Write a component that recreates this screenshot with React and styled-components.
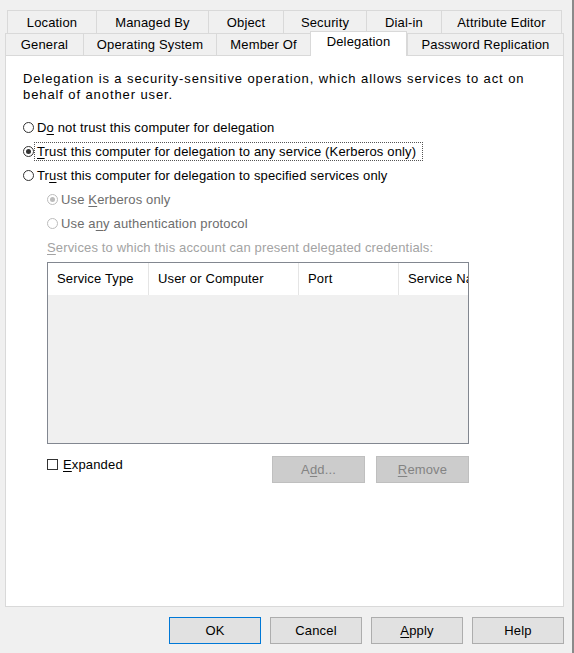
import React from "react";
import styled, { createGlobalStyle, css } from "styled-components";

const Global = createGlobalStyle`
  html, body { margin: 0; padding: 0; background: #f0f0f0; }
  body { font-family: "Liberation Sans", Arial, sans-serif; font-size: 13px; color: #000; letter-spacing: 0.15px; }
  * { box-sizing: border-box; }
`;

const Window = styled.div`
  width: 574px;
  height: 653px;
  background: #f0f0f0;
  border-right: 2px solid #8a8a8a;
  display: flex;
  flex-direction: column;
  overflow: hidden;
`;

const TabStrip = styled.div`
  padding: 10px 0 0 5px;
  display: flex;
  flex-direction: column;
`;

const TabRow = styled.div`
  display: flex;
  align-items: flex-start;
  padding-left: ${(p) => p.$indent || 0}px;
`;

const Tab = styled.div`
  flex: none;
  width: ${(p) => p.$w}px;
  height: ${(p) => p.$h}px;
  border-top: 1px solid #d9d9d9;
  border-left: 1px solid #d9d9d9;
  background: #f0f0f0;
  display: flex;
  align-items: center;
  justify-content: center;
  white-space: nowrap;
  line-height: 1;
  padding-top: ${(p) => p.$pt || 0}px;
  &:last-child { border-right: 1px solid #d9d9d9; }
  ${(p) =>
    p.$selected &&
    css`
      height: ${p.$h + 3}px;
      margin-top: -2px;
      margin-bottom: -1px;
      background: #fff;
      border-right: 1px solid #d9d9d9;
      position: relative;
      z-index: 1;
      padding-top: 0;
      padding-bottom: 5px;
    `}
`;

const Panel = styled.div`
  margin-left: 5px;
  width: 559px;
  height: 552px;
  background: #fff;
  border: 1px solid #d9d9d9;
  padding: 15px 17px 0 17px;
  display: flex;
  flex-direction: column;
`;

const Paragraph = styled.p`
  margin: 0;
  line-height: 16px;
  width: 520px;
  letter-spacing: 0.9px;
`;

const Options = styled.div`
  margin-top: 12px;
  display: flex;
  flex-direction: column;
`;

const OptionRow = styled.div`
  height: 24px;
  display: flex;
  align-items: center;
  padding-left: ${(p) => (p.$indent ? 24 : 0)}px;
  color: ${(p) => (p.$disabled ? "#6d6d6d" : "#000")};
`;

const RadioDot = styled.span`
  flex: none;
  width: 11px;
  height: 11px;
  border-radius: 50%;
  border: 1px solid ${(p) => (p.$disabled ? "#bcbcbc" : "#333")};
  background: #fff;
  display: flex;
  align-items: center;
  justify-content: center;
  &::after {
    content: "";
    display: ${(p) => (p.$checked ? "block" : "none")};
    width: 5px;
    height: 5px;
    border-radius: 50%;
    background: ${(p) => (p.$disabled ? "#bcbcbc" : "#333")};
  }
`;

const CheckBox = styled.span`
  flex: none;
  width: 11px;
  height: 11px;
  border: 1px solid #333;
  background: #fff;
`;

const Label = styled.span`
  border: 1px dotted ${(p) => (p.$focus ? "#555" : "transparent")};
  padding: 1px 2px 1px 2px;
  line-height: 15px;
  white-space: nowrap;
  ${(p) => p.$focus && css`width: 389px;`}
`;

const Mn = styled.u`
  text-decoration: underline;
  text-underline-offset: 2px;
`;

const StaticLabel = styled.div`
  height: 24px;
  display: flex;
  align-items: center;
  padding-left: 24px;
  color: #a3a3a3;
  white-space: nowrap;
`;

const ListView = styled.div`
  margin: 3px 0 0 24px;
  width: 422px;
  height: 182px;
  border: 1px solid #828790;
  background: #f0f0f0;
  display: flex;
  flex-direction: column;
  overflow: hidden;
`;

const Header = styled.div`
  height: 32px;
  background: #fff;
  display: flex;
  flex: none;
`;

const HeaderCell = styled.div`
  flex: ${(p) => (p.$w ? `0 0 ${p.$w}px` : "1 1 0")};
  min-width: 0;
  overflow: hidden;
  white-space: nowrap;
  border-right: ${(p) => (p.$w ? "1px solid #e5e5e5" : "none")};
  padding-left: 9px;
  padding-bottom: 2px;
  display: flex;
  align-items: center;
`;

const LowerRow = styled.div`
  margin: 12px 0 0 24px;
  width: 422px;
  display: flex;
  justify-content: space-between;
  align-items: flex-start;
`;

const CheckRow = styled.div`
  display: flex;
  align-items: center;
  margin-top: 1px;
  height: 15px;
  gap: 2px;
`;

const Buttons = styled.div`
  display: flex;
  gap: ${(p) => p.$gap}px;
`;

const Button = styled.div`
  width: ${(p) => p.$w}px;
  height: 27px;
  display: flex;
  align-items: center;
  justify-content: center;
  background: #e1e1e1;
  border: 1px solid #adadad;
  color: #000;
  ${(p) =>
    p.$default &&
    css`
      border-color: #0078d7;
    `}
  ${(p) =>
    p.$disabled &&
    css`
      background: #cccccc;
      border-color: #bfbfbf;
      color: #838383;
    `}
`;

const Footer = styled.div`
  display: flex;
  justify-content: flex-end;
  padding: 10px 8px 0 0;
`;

const row1 = [
  ["Location", 89],
  ["Managed By", 112],
  ["Object", 75],
  ["Security", 83],
  ["Dial-in", 75],
  ["Attribute Editor", 121],
];

const row2 = [
  ["General", 78],
  ["Operating System", 133],
  ["Member Of", 94],
  ["Delegation", 97, true],
  ["Password Replication", 157],
];

const columns = [
  ["Service Type", 101],
  ["User or Computer", 150],
  ["Port", 100],
  ["Service Name", 0],
];

export default function App() {
  return (
    <>
      <Global />
      <Window>
        <TabStrip>
          <TabRow $indent={2}>
            {row1.map(([t, w]) => (
              <Tab key={t} $w={w} $h={23}>
                {t}
              </Tab>
            ))}
          </TabRow>
          <TabRow>
            {row2.map(([t, w, sel]) => (
              <Tab key={t} $w={w} $h={22} $selected={sel}>
                {t}
              </Tab>
            ))}
          </TabRow>
        </TabStrip>
        <Panel>
          <Paragraph>
            Delegation is a security-sensitive operation, which allows services to act on behalf of
            another user.
          </Paragraph>
          <Options>
            <OptionRow>
              <RadioDot />
              <Label>
                D<Mn>o</Mn> not trust this computer for delegation
              </Label>
            </OptionRow>
            <OptionRow>
              <RadioDot $checked />
              <Label $focus>
                <Mn>T</Mn>rust this computer for delegation to any service (Kerberos only)
              </Label>
            </OptionRow>
            <OptionRow>
              <RadioDot />
              <Label>
                Tr<Mn>u</Mn>st this computer for delegation to specified services only
              </Label>
            </OptionRow>
            <OptionRow $indent $disabled>
              <RadioDot $checked $disabled />
              <Label>
                Use <Mn>K</Mn>erberos only
              </Label>
            </OptionRow>
            <OptionRow $indent $disabled>
              <RadioDot $disabled />
              <Label>
                Use a<Mn>n</Mn>y authentication protocol
              </Label>
            </OptionRow>
            <StaticLabel>
              <span>
                <Mn>S</Mn>ervices to which this account can present delegated credentials:
              </span>
            </StaticLabel>
          </Options>
          <ListView>
            <Header>
              {columns.map(([c, w]) => (
                <HeaderCell key={c} $w={w}>
                  {c}
                </HeaderCell>
              ))}
            </Header>
          </ListView>
          <LowerRow>
            <CheckRow>
              <CheckBox />
              <Label>
                <Mn>E</Mn>xpanded
              </Label>
            </CheckRow>
            <Buttons $gap={11}>
              <Button $w={93} $disabled>
                <span>
                  A<Mn>d</Mn>d...
                </span>
              </Button>
              <Button $w={93} $disabled>
                <span>
                  <Mn>R</Mn>emove
                </span>
              </Button>
            </Buttons>
          </LowerRow>
        </Panel>
        <Footer>
          <Buttons $gap={9}>
            <Button $w={92} $default>OK</Button>
            <Button $w={92}>Cancel</Button>
            <Button $w={92}>
              <span>
                <Mn>A</Mn>pply
              </span>
            </Button>
            <Button $w={92}>Help</Button>
          </Buttons>
        </Footer>
      </Window>
    </>
  );
}
